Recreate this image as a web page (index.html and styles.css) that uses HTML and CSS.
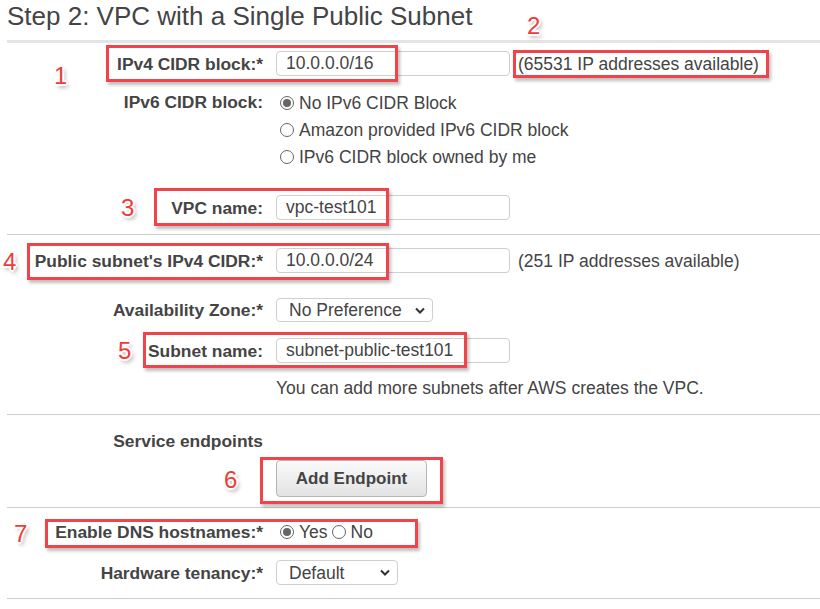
FILE: index.html
```html
<!DOCTYPE html>
<html>
<head>
<meta charset="utf-8">
<link rel="stylesheet" href="styles.css">
</head>
<body>
<div class="page">
  <h1 class="title">Step 2: VPC with a Single Public Subnet</h1>

  <div class="section s1">
    <div class="row">
      <div class="lbl">IPv4 CIDR block:*</div>
      <div class="field"><span class="input">10.0.0.0/16</span><span class="hint">(65531 IP addresses available)</span></div>
    </div>
    <div class="row top ipv6">
      <div class="lbl tall">IPv6 CIDR block:</div>
      <div class="field radios">
        <div class="radio-line"><span class="radio checked"></span><span>No IPv6 CIDR Block</span></div>
        <div class="radio-line"><span class="radio"></span><span>Amazon provided IPv6 CIDR block</span></div>
        <div class="radio-line"><span class="radio"></span><span>IPv6 CIDR block owned by me</span></div>
      </div>
    </div>
    <div class="row vpcname">
      <div class="lbl">VPC name:</div>
      <div class="field"><span class="input">vpc-test101</span></div>
    </div>
  </div>

  <div class="section s2">
    <div class="row">
      <div class="lbl">Public subnet's IPv4 CIDR:*</div>
      <div class="field"><span class="input">10.0.0.0/24</span><span class="hint">(251 IP addresses available)</span></div>
    </div>
    <div class="row az">
      <div class="lbl">Availability Zone:*</div>
      <div class="field"><span class="select az-select">No Preference<svg class="chev" width="10" height="7" viewBox="0 0 10 7"><path d="M1 1.5 L5 5.5 L9 1.5" fill="none" stroke="#333" stroke-width="2"/></svg></span></div>
    </div>
    <div class="row subnet">
      <div class="lbl">Subnet name:</div>
      <div class="field"><span class="input">subnet-public-test101</span></div>
    </div>
    <div class="row note">
      <div class="lbl"></div>
      <div class="field">You can add more subnets after AWS creates the VPC.</div>
    </div>
  </div>

  <div class="section s3">
    <div class="row">
      <div class="lbl">Service endpoints</div>
      <div class="field"></div>
    </div>
    <div class="row btnrow">
      <div class="lbl"></div>
      <div class="field"><span class="button">Add Endpoint</span></div>
    </div>
  </div>

  <div class="section s4">
    <div class="row">
      <div class="lbl">Enable DNS hostnames:*</div>
      <div class="field dns"><span class="radio checked"></span><span>Yes</span><span class="radio"></span><span>No</span></div>
    </div>
    <div class="row hw">
      <div class="lbl">Hardware tenancy:*</div>
      <div class="field"><span class="select hw-select">Default<svg class="chev" width="10" height="7" viewBox="0 0 10 7"><path d="M1 1.5 L5 5.5 L9 1.5" fill="none" stroke="#333" stroke-width="2"/></svg></span></div>
    </div>
  </div>

  <div class="box b1"></div>
  <div class="box b2"></div>
  <div class="box b3"></div>
  <div class="box b4"></div>
  <div class="box b5"></div>
  <div class="box b6"></div>
  <div class="box b7"></div>

  <span class="num n1">1</span>
  <span class="num n2">2</span>
  <span class="num n3">3</span>
  <span class="num n4">4</span>
  <span class="num n5">5</span>
  <span class="num n6">6</span>
  <span class="num n7">7</span>
</div>
</body>
</html>
```

FILE: styles.css
```css
html, body {
  margin: 0;
  padding: 0;
  background: #fff;
}
.page {
  position: relative;
  width: 820px;
  height: 609px;
  overflow: hidden;
  padding-left: 7px;
  box-sizing: border-box;
  font-family: "Liberation Sans", Arial, sans-serif;
  font-size: 17.5px;
  color: #444;
}
.title {
  margin: 0;
  padding-top: 1px;
  height: 30px;
  line-height: 30px;
  font-size: 26px;
  font-weight: normal;
  color: #444;
  margin-bottom: 9px;
  white-space: nowrap;
}
.section {
  border-bottom: 1px solid #ccc;
}
.s1 {
  border-top: 3px solid #e4e4e4;
  padding-top: 8px;
  padding-bottom: 14px;
}
.s2 {
  padding-top: 13px;
  padding-bottom: 16px;
}
.s3 {
  padding-top: 16px;
  padding-bottom: 10px;
}
.s4 {
  padding-top: 14px;
  padding-bottom: 13px;
}
.row {
  display: flex;
  align-items: center;
  gap: 13px;
}
.row.top {
  align-items: flex-start;
}
.lbl {
  width: 256px;
  flex: none;
  text-align: right;
  font-weight: bold;
  font-size: 17.4px;
  line-height: 20px;
  white-space: nowrap;
}
.lbl.tall {
  line-height: 27px;
}
.field {
  display: flex;
  align-items: center;
  line-height: 20px;
  white-space: nowrap;
}
.input {
  box-sizing: border-box;
  display: inline-block;
  width: 234px;
  height: 25px;
  line-height: 23px;
  padding-left: 9px;
  border: 1px solid #cfcfcf;
  border-radius: 4px;
  background: #fff;
  color: #444;
}
.hint {
  margin-left: 8px;
}
.ipv6 {
  margin-top: 13px;
}
.radios {
  flex-direction: column;
  align-items: flex-start;
}
.radio-line {
  display: flex;
  align-items: center;
  height: 27px;
}
.radio {
  box-sizing: border-box;
  display: inline-block;
  flex: none;
  width: 14px;
  height: 14px;
  border: 1px solid #666;
  border-radius: 50%;
  background: #fff;
  margin-left: 4px;
  margin-right: 5px;
  position: relative;
}
.radio.checked::after {
  content: "";
  position: absolute;
  left: 2px;
  top: 2px;
  width: 8px;
  height: 8px;
  border-radius: 50%;
  background: #666;
}
.vpcname {
  margin-top: 25px;
}
.az {
  margin-top: 25px;
}
.subnet {
  margin-top: 16px;
}
.note {
  margin-top: 15px;
}
.select {
  box-sizing: border-box;
  display: inline-flex;
  align-items: center;
  justify-content: space-between;
  height: 25px;
  padding-left: 12px;
  padding-right: 7px;
  border: 1px solid #cfcfcf;
  border-radius: 4px;
  background: #fff;
  color: #444;
}
.az-select {
  width: 157px;
  height: 24px;
}
.hw-select {
  width: 122px;
}
.chev {
  display: block;
}
.btnrow {
  margin-top: 9px;
}
.button {
  box-sizing: border-box;
  display: inline-flex;
  align-items: center;
  justify-content: center;
  width: 151px;
  height: 37px;
  border: 1px solid #b5b5b5;
  border-radius: 4px;
  background: linear-gradient(#fafafa, #e3e3e3);
  font-weight: bold;
  font-size: 17px;
  color: #444;
}
.dns .radio:nth-of-type(2) {
  margin-left: 4px;
}
.hw {
  margin-top: 18px;
}

/* annotations */
.box {
  position: absolute;
  box-sizing: border-box;
  border: 3px solid #f0434a;
  box-shadow: 2px 3px 3px rgba(0, 0, 0, 0.25);
}
.b1 { left: 106px; top: 45px; width: 292px; height: 37px; }
.b2 { left: 513px; top: 50px; width: 256px; height: 28px; }
.b3 { left: 154px; top: 188px; width: 235px; height: 38px; }
.b4 { left: 27px; top: 243px; width: 362px; height: 37px; }
.b5 { left: 143px; top: 332px; width: 324px; height: 36px; }
.b6 { left: 260px; top: 457px; width: 183px; height: 47px; }
.b7 { left: 45px; top: 519px; width: 373px; height: 29px; }

.num {
  position: absolute;
  font-family: "Liberation Sans", Arial, sans-serif;
  font-size: 24px;
  line-height: 24px;
  color: #ee3b3b;
  text-shadow:
    -1px -1px 0 #fff, 1px -1px 0 #fff, -1px 1px 0 #fff, 1px 1px 0 #fff,
    0 -2px 0 #fff, 0 2px 0 #fff, -2px 0 0 #fff, 2px 0 0 #fff,
    2px 3px 4px rgba(0, 0, 0, 0.45);
}
.n1 { left: 54px; top: 64px; }
.n2 { left: 527px; top: 14px; }
.n3 { left: 121px; top: 196px; }
.n4 { left: 3px; top: 250px; }
.n5 { left: 118px; top: 339px; }
.n6 { left: 224px; top: 468px; }
.n7 { left: 14px; top: 522px; }
```
